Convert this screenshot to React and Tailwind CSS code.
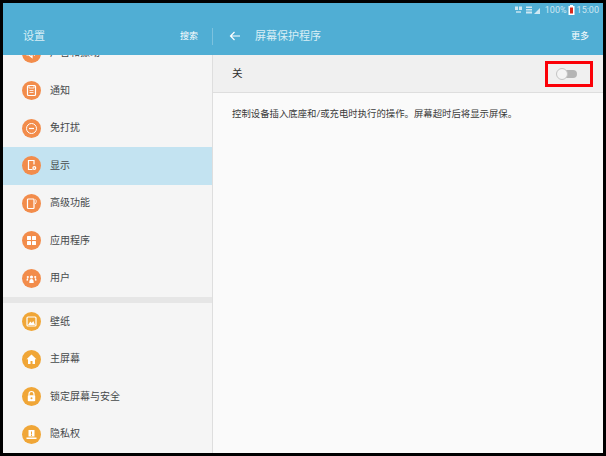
const FONT = "font-['Roboto','Noto_Sans_CJK_SC','Noto_Sans',sans-serif]";

const P = { fill: "none", stroke: "#fff", strokeWidth: 1.2 };
const icons = {
  sound: <path d="M5 8v3h2l3 2.500v-8L7 8zM12 7.500c1 1 1 3 0 4" {...P} />,
  note: <g><rect x="5.500" y="4.500" width="8" height="10" rx="1" {...P} /><path d="M7 4.500v2.500h5V4.500M7.500 9.500h4M7.500 11.500h4" {...P} strokeWidth="0.800" /></g>,
  dnd: <g><circle cx="9.500" cy="9.500" r="5" {...P} strokeWidth="1" /><path d="M7 9.500h5" {...P} /></g>,
  display: <g><path d="M10.500 13.500H6.500v-9h5.500v4" {...P} /><circle cx="12.300" cy="12" r="2" fill="#fff" /><circle cx="12.300" cy="12" r=".7" fill="#f28c4b" /></g>,
  adv: <g><rect x="5.500" y="5" width="6.500" height="9.500" rx="0.800" {...P} /><path d="M13.500 5.500c1 .8 1 3-.3 4.500" {...P} strokeWidth="0.900" /></g>,
  apps: <g fill="#fff"><rect x="5" y="5" width="4" height="4" rx=".5" /><rect x="10" y="5" width="4" height="4" rx=".5" /><rect x="5" y="10" width="4" height="4" rx=".5" /><rect x="10" y="10" width="4" height="4" rx=".5" /></g>,
  user: <g fill="#fff"><circle cx="9.500" cy="8" r="1.600" /><path d="M7.300 14c0-3 .7-4 2.200-4s2.200 1 2.200 4z" /><circle cx="5.800" cy="8" r="1.100" /><circle cx="13.200" cy="8" r="1.100" /><path d="M4.500 11.500c0-1.800.4-2.300 1.200-2.300l.6.300-.5 2.300zM14.500 11.500c0-1.800-.4-2.300-1.200-2.300l-.6.300.5 2.300z" /></g>,
  wall: <g><rect x="5" y="5" width="9" height="9" rx="1" {...P} /><path d="M6 13l2.300-3.500 1.500 1.500 1.500-2 1.700 4z" fill="#fff" /></g>,
  home: <path d="M9.500 4.500L4.500 9.300h1.500V14h2.500v-3h2v3H13V9.300h1.500z" fill="#fff" />,
  lock: <g><path d="M7 8.500V7a2.500 2.500 0 015 0v1.500" {...P} /><rect x="5.800" y="8.300" width="7.400" height="6" rx=".8" fill="#fff" /><circle cx="9.500" cy="11.300" r="1" fill="#f0a637" /></g>,
  privacy: <g fill="#fff"><path d="M6.500 5h6v6.500h-6z" /><rect x="4.500" y="12.500" width="10" height="1.500" /><rect x="9" y="6.500" width="1" height="3" fill="#f0a637" /><rect x="9" y="10" width="1" height="1" fill="#f0a637" /></g>,
};

function Row({ icon, label, color, active }) {
  return (
    <div className={`flex h-[37.5px] items-center pl-[19px] ${active ? "bg-[#c3e3f1]" : ""}`}>
      <span className={`flex h-[19px] w-[19px] shrink-0 items-center justify-center rounded-full ${color}`}>
        <svg width="19" height="19" viewBox="0 0 19 19">{icons[icon]}</svg>
      </span>
      <span className="ml-[9px] text-[10px] leading-none text-[#46494b]">{label}</span>
    </div>
  );
}

export default function App() {
  return (
    <div className={`h-[456px] w-[606px] overflow-hidden bg-black p-[3px] ${FONT}`}>
      <div className="flex h-[450px] w-[600px] flex-col overflow-hidden bg-[#fafafa]">
        <header className="flex h-[52px] shrink-0 flex-col bg-[#50aed4] text-white">
          <div className="flex h-[14px] items-center justify-end pr-[4px] text-[#cfe8f3]">
            <svg width="26" height="9" viewBox="0 0 26 9" className="mr-[4px]" fill="#cfe8f3">
              <rect x="0" y="0.500" width="3" height="3.500" /><rect x="4" y="0.500" width="3" height="3.500" /><rect x="1" y="5" width="5" height="2" opacity=".7" />
              <rect x="11" y="0.500" width="6" height="1.500" /><rect x="11" y="3" width="6" height="1.500" /><rect x="11" y="5.500" width="6" height="2" />
              <path d="M19 8l6-6v6z" />
            </svg>
            <span className="text-[9px] leading-none">100%</span>
            <svg width="7" height="10" viewBox="0 0 7 10" className="ml-[1px] mr-[2px]">
              <rect x="2" y="0" width="3" height="1" fill="#fff" />
              <rect x="0.500" y="1" width="6" height="9" fill="#fff" />
              <rect x="2" y="2.500" width="3" height="6" fill="#d92a1c" />
            </svg>
            <span className="text-[9px] leading-none">15:00</span>
          </div>
          <div className="flex flex-1 items-center">
            <div className="flex w-[209px] items-center justify-between pl-[20px] pr-[14px]">
              <span className="text-[11px] leading-none text-[#d9eef6]">设置</span>
              <span className="text-[9px] leading-none">搜索</span>
            </div>
            <div className="h-[17px] w-px bg-[#7cc2de]" />
            <svg width="12" height="12" viewBox="0 0 12 12" className="ml-[16px]" fill="none" stroke="#fff" strokeWidth="1.200">
              <path d="M11 6H1.500M5.500 2L1.500 6l4 4" />
            </svg>
            <span className="ml-[14px] text-[11px] leading-none text-[#d9eef6]">屏幕保护程序</span>
            <span className="ml-auto mr-[14px] text-[9px] leading-none">更多</span>
          </div>
        </header>

        <div className="flex min-h-0 flex-1">
          <aside className="w-[209px] shrink-0 overflow-hidden bg-[#f5f5f5]">
            <div className="-mt-[20.5px]">
              <Row icon="sound" label="声音和振动" color="bg-[#f28c4b]" />
              <Row icon="note" label="通知" color="bg-[#f28c4b]" />
              <Row icon="dnd" label="免打扰" color="bg-[#f28c4b]" />
              <Row icon="display" label="显示" color="bg-[#f28c4b]" active />
              <Row icon="adv" label="高级功能" color="bg-[#f28c4b]" />
              <Row icon="apps" label="应用程序" color="bg-[#f28c4b]" />
              <Row icon="user" label="用户" color="bg-[#f28c4b]" />
              <div className="h-[6px] bg-[#e6e6e6]" />
              <Row icon="wall" label="壁纸" color="bg-[#f0a637]" />
              <Row icon="home" label="主屏幕" color="bg-[#f0a637]" />
              <Row icon="lock" label="锁定屏幕与安全" color="bg-[#f0a637]" />
              <Row icon="privacy" label="隐私权" color="bg-[#f0a637]" />
            </div>
          </aside>
          <div className="w-px shrink-0 bg-[#dedede]" />
          <main className="min-w-0 flex-1">
            <div className="flex h-[38px] items-center justify-between border-b border-[#dedede] bg-[#f0f0f0] pl-[19px] pr-[10px]">
              <span className="translate-y-px text-[10.5px] leading-none text-[#2f2f2f]">关</span>
              <div className="flex h-[26px] w-[48px] items-center border-[3px] border-[#fb0007] pl-[9px]">
                <div className="relative h-[8px] w-[20px] rounded-full bg-[#b5b5b5]">
                  <div className="absolute -left-px -top-[2px] h-[12px] w-[12px] rounded-full border border-[#c4c4c4] bg-[#f4f4f4]" />
                </div>
              </div>
            </div>
            <p className="ml-[19px] mt-[15px] text-[9.4px] leading-[12px] text-[#3a3a3a]">
              控制设备插入底座和/或充电时执行的操作。屏幕超时后将显示屏保。
            </p>
          </main>
        </div>
      </div>
    </div>
  );
}
